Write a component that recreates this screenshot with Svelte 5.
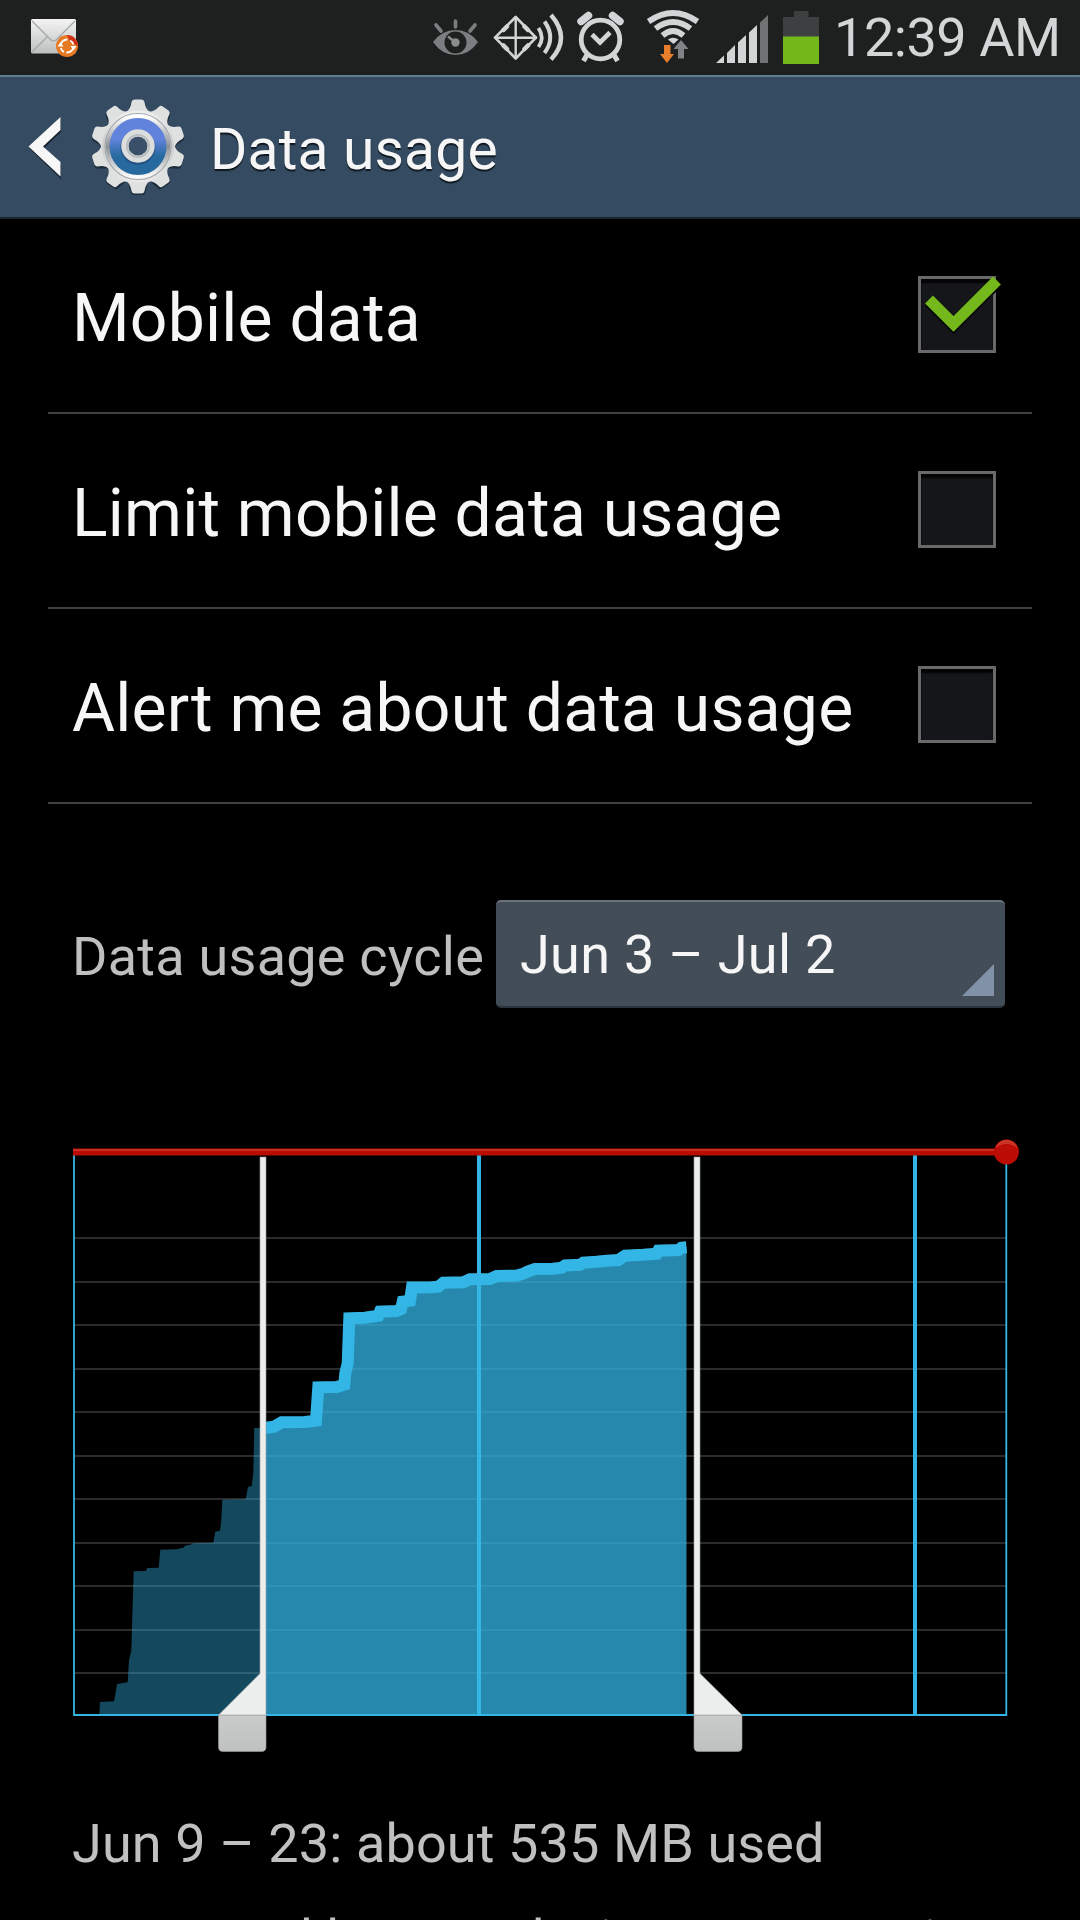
<script lang="ts">
	interface Setting {
		label: string;
		checked: boolean;
	}

	let settings = $state<Setting[]>([
		{ label: 'Mobile data', checked: true },
		{ label: 'Limit mobile data usage', checked: false },
		{ label: 'Alert me about data usage', checked: false }
	]);

	const gridRows = [1237, 1281, 1324, 1368, 1411, 1455, 1498, 1542, 1585, 1629, 1672];
	const weekLines = [477, 913];
	const teeth = [0, 36, 72, 108, 144, 180, 216, 252, 288, 324];

	// Cumulative usage before the selected range
	const before =
		'M99.3 1715L100 1702L114 1701.3L115.3 1695L117 1684L127.7 1682.3L129 1660L131.3 1650.7L132 1627L133.7 1571.3L146 1571L147 1568L158.7 1567.7L160.3 1549.7L176.7 1549.3L183.3 1547.7L185 1545.7L191.7 1544.3L193.3 1543.3L213.3 1542.7L215.3 1531.7L220 1530.7L221.3 1520L222.3 1499.7L245.7 1499.3L248 1487L251.7 1486L253.3 1473L254.3 1428H262V1715Z';

	// Usage inside the selected range
	const line =
		'L274 1426.7L281.7 1422.3L305 1422L316 1420.7L318.3 1387.3L336.7 1387L344.3 1384.7L345.3 1373.3L347.7 1363.3L349.3 1318.3L365 1317.7L378.3 1315.7L380 1311.7L396.7 1311L401 1309L402.7 1301.7L410 1300.7L412 1287.5L431.7 1287.3L438.3 1286.7L443.3 1282.8L463.3 1282.3L470 1279.3L490 1279L496.7 1276L516.7 1275.5L523.3 1273.7L528.3 1271.3L535 1269L553.3 1268.7L561.7 1267.7L565 1265.5L580 1264.8L583.3 1262.7L596.7 1261.7L606.7 1260.7L618.3 1260L625 1255.7L643.3 1254.8L656.7 1253.7L658.3 1250.7L678.3 1250L681.3 1247.8L686.5 1247.3';
</script>

<div class="screen">
	<div class="status-bar">
		<svg class="mail" width="54" height="75" viewBox="28 0 54 75">
			<defs>
				<linearGradient id="paper" x1="0" y1="0" x2="0" y2="1">
					<stop offset="0" stop-color="#f4f4f4" />
					<stop offset="1" stop-color="#bdbfbf" />
				</linearGradient>
			</defs>
			<rect x="31" y="19" width="45" height="34.5" rx="1.5" fill="url(#paper)" />
			<path d="M32 21L51 40Q53.5 42 56 40L75 21M32 52L47 37M60 37L75 52" fill="none" stroke="#a4a7a7" stroke-width="1.3" />
			<circle cx="67" cy="46" r="11" fill="#e67a25" />
			<path d="M67 35A11 11 0 0 1 78 46L70 42Z" fill="#cf3218" />
			<path d="M60.5 46A6.5 6.5 0 0 1 67.5 39.5M73.5 44.5A6.5 6.5 0 0 0 70 40.5M73.5 46.5A6.5 6.5 0 0 1 66.5 52.5M60.8 48A6.5 6.5 0 0 0 64 52" fill="none" stroke="#fff" stroke-width="1.8" />
			<path d="M57.5 46.5L60.5 42L63.5 46.5ZM70.5 46L73.5 50.5L76.5 46Z" fill="#fff" />
		</svg>
		<div class="status-right">
			<!-- smart stay -->
			<svg width="60" height="75" viewBox="428 0 60 75">
				<path d="M436 25L441 31M455.5 21V27M475 25L470 31" fill="none" stroke="#7b7d80" stroke-width="3.6" stroke-linecap="round" />
				<path fill-rule="evenodd" d="M433 42Q442 30 455.5 30T478 42Q469 55 455.5 55T433 42ZM455.5 31.5A11 11 0 1 0 455.5 53.5A11 11 0 1 0 455.5 31.5Z" fill="#7b7d80" />
				<circle cx="455.5" cy="42.5" r="4.2" fill="#8a8c8e" />
				<path d="M455.5 42.5L448 36.5" stroke="#8a8c8e" stroke-width="2.4" />
			</svg>
			<!-- nfc -->
			<svg width="84" height="75" viewBox="488 0 84 75" fill="none" stroke="#d3d4d6">
				<path d="M515.7 17L536 37.7L515.7 58.5L495 37.7Z" stroke-width="2.6" stroke-linejoin="round" />
				<path d="M507 26.5L503.5 30M524.5 26.5L528 30M507 49L503.5 45.5M524.5 49L528 45.5" stroke-width="4.5" stroke-linecap="round" />
				<path d="M515.7 16.5V59M494.5 37.7H537" stroke-width="2.4" />
				<path d="M538.5 28Q545 38 538.5 47" stroke-width="3.8" />
				<path d="M544.5 21.5Q556 37.5 544.5 53" stroke-width="4" />
				<path d="M551 15Q571 38 551 59.5" stroke-width="4.4" />
			</svg>
			<!-- alarm -->
			<svg width="62" height="75" viewBox="572 0 62 75" fill="none" stroke="#d3d4d6">
				<circle cx="600.5" cy="39.5" r="19.3" stroke-width="4.8" />
				<path d="M581 21.5L588.5 15.5M612.5 15.5L620 21.5" stroke-width="7.5" stroke-linecap="round" />
				<path d="M588 53L583.5 61M613 53L617.5 61" stroke-width="5" />
				<path d="M592 34.5L600 42.5L610 32.5" stroke-width="4.6" />
			</svg>
			<!-- wifi -->
			<svg width="74" height="75" viewBox="634 0 74 75">
				<g fill="none" stroke="#d3d4d6" stroke-width="5.8">
					<path d="M648.5 21.5Q673 4.5 697.5 21.5" />
					<path d="M655.5 28.5Q673 15.5 690.5 28.5" />
					<path d="M662.5 35.5Q673 26.5 683.5 35.5" />
				</g>
				<path d="M668 39.5Q673 36 678.5 39.5L673.5 44Z" fill="#d3d4d6" />
				<path d="M664 45H670.5V54H674L667 63L660 54H664Z" fill="#e67e2c" />
				<path d="M678 58.5V49H673.5L681 40L688.5 49H684V58.5Z" fill="#808286" />
			</svg>
			<!-- signal -->
			<svg width="70" height="75" viewBox="708 0 70 75" fill="#d3d4d6">
				<path d="M716 63L724 55.5V63ZM727 63V53L735 45V63ZM738 63V42.5L746 35V63ZM749 63V32.5L757 25V63Z" />
				<path d="M760 63V22.5L768 15V63Z" fill="#707274" />
			</svg>
			<!-- battery -->
			<svg width="56" height="75" viewBox="778 0 56 75">
				<path d="M794 11H808.5V17H819V37H783V17H794Z" fill="#3d3f40" />
				<rect x="783" y="36.5" width="36" height="27.5" fill="#74b71b" />
			</svg>
			<span class="clock">12:39 AM</span>
		</div>
	</div>

	<header class="action-bar">
		<svg class="back" width="36" height="70" viewBox="27 112 36 70">
			<path d="M61 119L29.5 148.5L61 179V164.5L43.5 148.5L61 132Z" fill="#16232e" />
			<path d="M60.5 117L28.5 146.5L60.5 176.5V162L43 146.5L60.5 130Z" fill="#f7f7f7" />
		</svg>
		<svg class="gear" width="100" height="100" viewBox="88 97 100 100">
			<defs>
				<linearGradient id="metal" x1="0" y1="0" x2="0" y2="1">
					<stop offset="0" stop-color="#eeeeee" />
					<stop offset="0.5" stop-color="#c9cbcc" />
					<stop offset="1" stop-color="#e8e8e8" />
				</linearGradient>
				<linearGradient id="rim" x1="0" y1="0" x2="0" y2="1">
					<stop offset="0" stop-color="#ffffff" />
					<stop offset="0.5" stop-color="#8d9296" />
					<stop offset="1" stop-color="#fafafa" />
				</linearGradient>
				<linearGradient id="enamel" x1="0" y1="0" x2="0" y2="1">
					<stop offset="0.3" stop-color="#6283dc" />
					<stop offset="0.75" stop-color="#276a9f" />
				</linearGradient>
			</defs>
			<g fill="#1e2d3b">
				{#each teeth as angle}
					<path d="M128 112L131 101Q132 99.500 134 99.500H142Q144 99.500 145 101L148 112Z" transform="translate(0 1.5) rotate({angle} 138 146.5)" />
				{/each}
			</g>
			<circle cx="138" cy="146.5" r="31" fill="none" stroke="#dcdddd" stroke-width="12" />
			<g fill="#dfe0e0">
				{#each teeth as angle}
					<path d="M124.5 113Q130.5 110 131.5 102Q132 99.5 134.5 99.5H141.5Q144 99.5 144.5 102Q145.5 110 151.5 113Z" transform="rotate({angle} 138 146.5)" />
				{/each}
			</g>
			<circle cx="138" cy="146.5" r="33" fill="none" stroke="url(#metal)" stroke-width="6" />
			<circle cx="138" cy="146.5" r="33" fill="none" stroke="#a5a8aa" stroke-width="1.2" />
			<circle cx="138" cy="146.5" r="30" fill="none" stroke="url(#rim)" stroke-width="4.5" />
			<circle cx="138" cy="146.5" r="19" fill="none" stroke="url(#enamel)" stroke-width="19" />
			<circle cx="138" cy="147.3" r="14" fill="none" stroke="#1d4470" stroke-width="7" opacity="0.6" />
			<circle cx="138" cy="146" r="13" fill="none" stroke="#dcdddd" stroke-width="7.5" />
			<circle cx="138" cy="146" r="11" fill="none" stroke="#b9bdc0" stroke-width="2" />
			<circle cx="138" cy="146" r="9.3" fill="#3a5068" />
		</svg>
		<h1>Data usage</h1>
	</header>

	<ul class="settings">
		{#each settings as item}
			<li>
				<span class="label">{item.label}</span>
				<button
					class="checkbox"
					role="checkbox"
					aria-checked={item.checked}
					aria-label={item.label}
					onclick={() => { item.checked = !item.checked; }}
				>
					{#if item.checked}
						<svg class="tick" width="90" height="78" viewBox="0 0 90 78">
							<path d="M11 26L35.5 50.5L79 7" fill="none" stroke="#050505" stroke-width="11" />
							<path d="M11 23.5L35.5 48L79 4.5" fill="none" stroke="#75b81c" stroke-width="11" />
						</svg>
					{/if}
				</button>
			</li>
		{/each}
	</ul>

	<div class="cycle">
		<span class="cycle-label">Data usage cycle</span>
		<button class="spinner">
			<span>Jun 3 – Jul 2</span>
			<svg class="corner" width="32" height="32" viewBox="0 0 32 32">
				<path d="M32 0V32H0Z" fill="#8191a6" />
			</svg>
		</button>
	</div>

	<svg class="chart" width="1080" height="640" viewBox="0 1130 1080 640">
		<defs>
			<linearGradient id="grip" x1="0" y1="0" x2="0" y2="1">
				<stop offset="0" stop-color="#c9caca" />
				<stop offset="1" stop-color="#bfc0c0" />
			</linearGradient>
		</defs>

		{#each gridRows as y}
			<rect x="75" {y} width="931" height="2" fill="#2b2b2b" />
		{/each}

		<path d={before} fill="#33b5e5" fill-opacity="0.4" />
		<path d="M266 1427.7{line}V1715H266Z" fill="#33b5e5" fill-opacity="0.75" />
		<path d="M266 1427.7{line}" fill="none" stroke="#33b5e5" stroke-width="12" />

		{#each weekLines as x}
			<rect {x} y="1155" width="4" height="560" fill="#33b5e5" />
		{/each}
		<path d="M74 1155V1715H1006.3V1155" fill="none" stroke="#33b5e5" stroke-width="1.8" />

		<!-- range handles -->
		<g stroke="#9a9c9c" stroke-opacity="0.6">
			<path d="M218.5 1715H266V1747Q266 1751.5 261.5 1751.5H223Q218.5 1751.5 218.5 1747Z" fill="url(#grip)" />
			<path d="M260 1157H266V1715H218.5L260 1673.5Z" fill="#eceeee" />
			<path d="M694 1715H742V1747Q742 1751.5 737.5 1751.5H698.5Q694 1751.5 694 1747Z" fill="url(#grip)" />
			<path d="M700 1157H694V1715H742L700 1673.5Z" fill="#eceeee" />
		</g>

		<!-- limit -->
		<rect x="73" y="1148.5" width="934" height="7" fill="#b90c03" />
		<rect x="73" y="1149" width="934" height="2" fill="#c52e20" />
		<circle cx="1006.5" cy="1152" r="12.5" fill="#bb0d05" />
		<path d="M995.5 1148A11.5 11.5 0 0 1 1017.5 1148Q1006 1140 995.5 1148Z" fill="#cb3326" />
	</svg>

	<p class="summary">Jun 9 – 23: about 535 MB used</p>
	<p class="note">Measured by your device. Your service</p>
</div>

<style>
	:global(body) {
		background: #000;
	}

	.screen {
		display: flex;
		flex-direction: column;
		width: 1080px;
		height: 1920px;
		overflow: hidden;
		background: #000;
		color: #f6f6f6;
		font-family: Roboto, 'Liberation Sans', sans-serif;
		font-size: 54px;
	}

	svg {
		display: block;
		flex: none;
	}

	.status-bar {
		display: flex;
		flex: none;
		justify-content: space-between;
		height: 75px;
		padding-left: 28px;
		background: #1e1f1f;
	}

	.status-right {
		display: flex;
		width: 652px;
	}

	.clock {
		line-height: 75px;
		letter-spacing: -0.45px;
		white-space: nowrap;
		color: #d4d5d7;
	}

	.action-bar {
		display: flex;
		flex: none;
		align-items: center;
		box-sizing: border-box;
		height: 144px;
		padding: 0 27px;
		border-top: 2px solid #5e7d92;
		border-bottom: 2px solid #1b2731;
		background: #354b61;
	}

	.gear {
		margin-left: 25px;
	}

	h1 {
		margin: 5px 0 0 22px;
		font-size: 57px;
		font-weight: 400;
		letter-spacing: 0.15px;
		text-shadow: 0 2px 1px #0e1820;
	}

	.settings {
		margin: 0 48px;
		padding: 0;
		list-style: none;
	}

	li {
		display: flex;
		align-items: center;
		justify-content: space-between;
		box-sizing: border-box;
		height: 195px;
		padding: 0 36px 0 24px;
		border-bottom: 2px solid #404040;
	}

	.label {
		padding-top: 5px;
		font-size: 66px;
		letter-spacing: 0.23px;
	}

	.checkbox {
		position: relative;
		width: 78px;
		height: 77px;
		margin: 0 0 2px;
		padding: 0;
		border: 3px solid #696969;
		background: #15161a;
		box-shadow: inset 0 4px 2px #040405;
	}

	.tick {
		position: absolute;
		top: -3px;
		left: -3px;
	}

	.cycle {
		display: flex;
		align-items: center;
		justify-content: space-between;
		height: 108px;
		margin: 96px 75px 0 72px;
	}

	.cycle-label {
		padding-top: 4px;
		letter-spacing: 0.25px;
		color: #bfbfbf;
	}

	.spinner {
		display: flex;
		align-items: center;
		justify-content: space-between;
		box-sizing: border-box;
		width: 509px;
		height: 108px;
		padding: 0 11px 0 24px;
		border: 0;
		border-top: 2px solid #6d7279;
		border-bottom: 2px solid #2b343d;
		border-radius: 5px;
		background: #434d57;
		color: #f6f6f6;
		font: inherit;
		letter-spacing: 0.3px;
	}

	.corner {
		align-self: flex-end;
		margin-bottom: 10px;
	}

	.chart {
		margin-top: 122px;
	}

	p {
		margin: 0 72px;
		line-height: 64px;
		white-space: nowrap;
		color: #c0c0c0;
	}

	.summary {
		margin-top: 42px;
		letter-spacing: 0.12px;
	}

	.note {
		margin-top: 32px;
		letter-spacing: 0.15px;
	}
</style>
